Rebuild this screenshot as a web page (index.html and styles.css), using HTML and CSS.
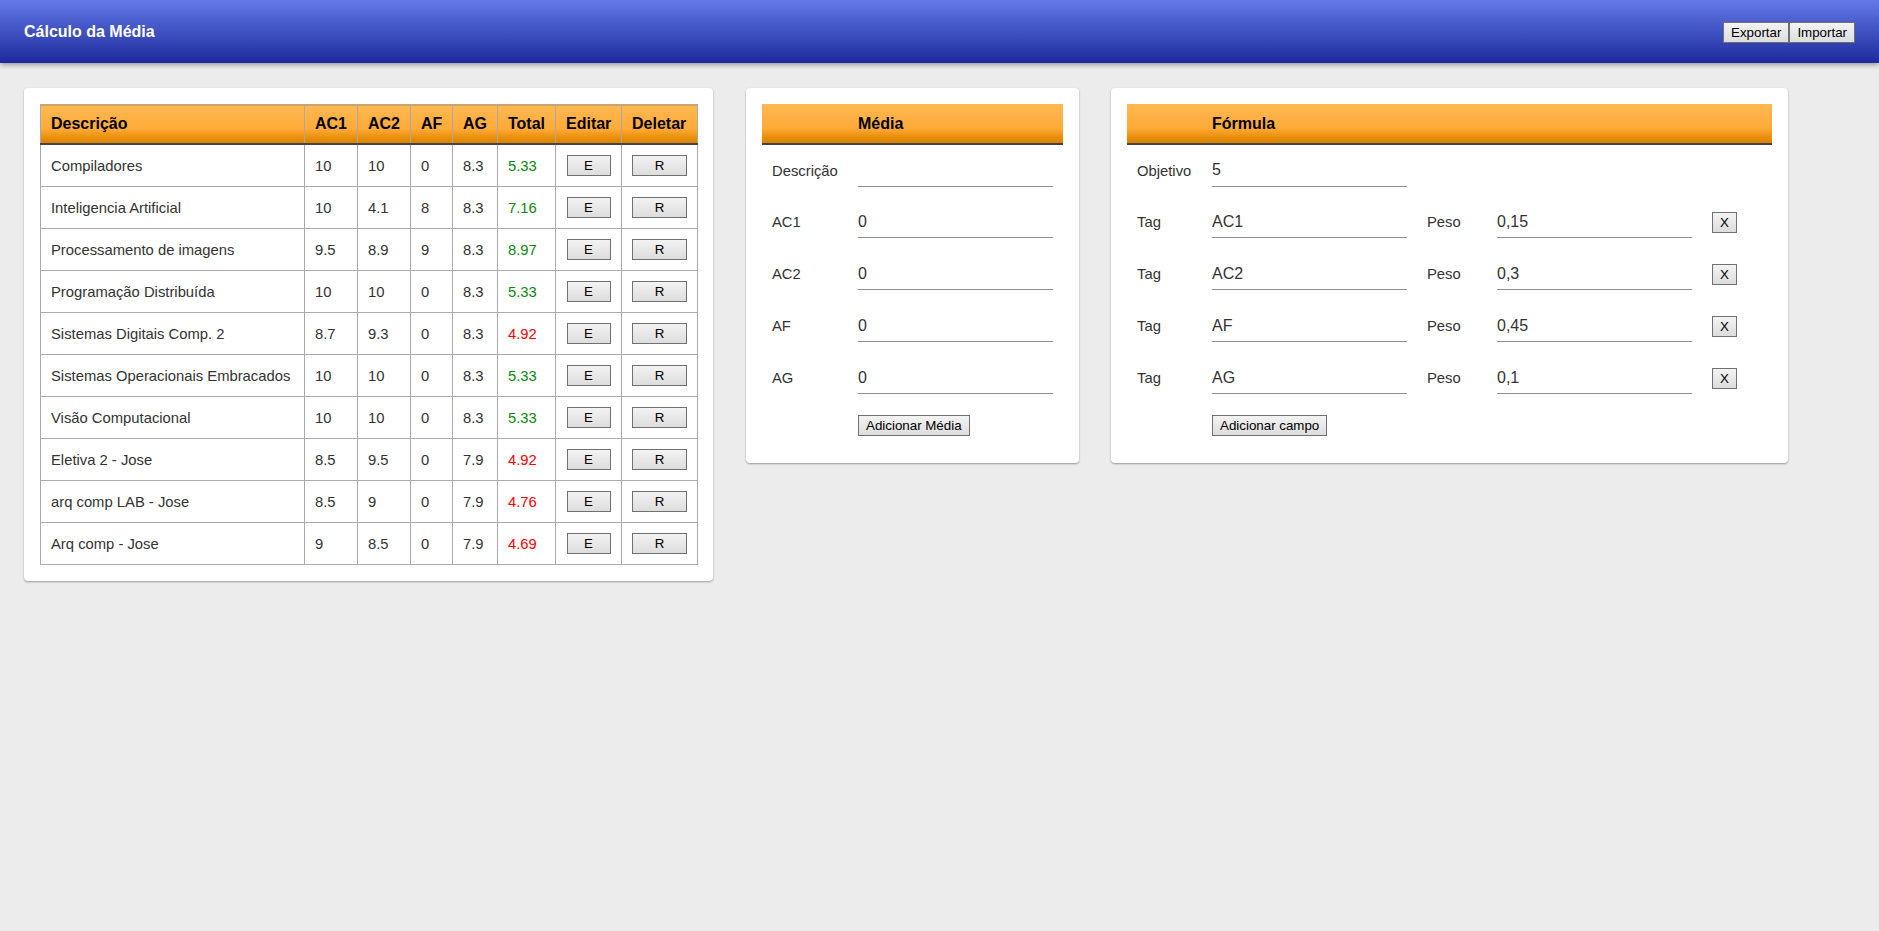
FILE: index.html
```html
<!DOCTYPE html>
<html lang="pt-BR">
<head>
<meta charset="utf-8">
<title>Cálculo da Média</title>
<link rel="stylesheet" href="styles.css">
</head>
<body>
<header class="topbar">
  <h1 class="title">Cálculo da Média</h1>
  <div class="actions">
    <button class="btn">Exportar</button><button class="btn">Importar</button>
  </div>
</header>
<main class="content">
  <section class="card card-list">
    <table class="grid">
      <colgroup>
        <col class="c-desc"><col class="c-ac1"><col class="c-ac2"><col class="c-af"><col class="c-ag"><col class="c-total"><col class="c-edit"><col class="c-del">
      </colgroup>
      <thead>
        <tr><th>Descrição</th><th>AC1</th><th>AC2</th><th>AF</th><th>AG</th><th>Total</th><th>Editar</th><th>Deletar</th></tr>
      </thead>
      <tbody>
        <tr><td>Compiladores</td><td>10</td><td>10</td><td>0</td><td>8.3</td><td class="ok">5.33</td><td class="c"><button class="btn btn-e">E</button></td><td class="c"><button class="btn btn-r">R</button></td></tr>
        <tr><td>Inteligencia Artificial</td><td>10</td><td>4.1</td><td>8</td><td>8.3</td><td class="ok">7.16</td><td class="c"><button class="btn btn-e">E</button></td><td class="c"><button class="btn btn-r">R</button></td></tr>
        <tr><td>Processamento de imagens</td><td>9.5</td><td>8.9</td><td>9</td><td>8.3</td><td class="ok">8.97</td><td class="c"><button class="btn btn-e">E</button></td><td class="c"><button class="btn btn-r">R</button></td></tr>
        <tr><td>Programação Distribuída</td><td>10</td><td>10</td><td>0</td><td>8.3</td><td class="ok">5.33</td><td class="c"><button class="btn btn-e">E</button></td><td class="c"><button class="btn btn-r">R</button></td></tr>
        <tr><td>Sistemas Digitais Comp. 2</td><td>8.7</td><td>9.3</td><td>0</td><td>8.3</td><td class="bad">4.92</td><td class="c"><button class="btn btn-e">E</button></td><td class="c"><button class="btn btn-r">R</button></td></tr>
        <tr><td>Sistemas Operacionais Embracados</td><td>10</td><td>10</td><td>0</td><td>8.3</td><td class="ok">5.33</td><td class="c"><button class="btn btn-e">E</button></td><td class="c"><button class="btn btn-r">R</button></td></tr>
        <tr><td>Visão Computacional</td><td>10</td><td>10</td><td>0</td><td>8.3</td><td class="ok">5.33</td><td class="c"><button class="btn btn-e">E</button></td><td class="c"><button class="btn btn-r">R</button></td></tr>
        <tr><td>Eletiva 2 - Jose</td><td>8.5</td><td>9.5</td><td>0</td><td>7.9</td><td class="bad">4.92</td><td class="c"><button class="btn btn-e">E</button></td><td class="c"><button class="btn btn-r">R</button></td></tr>
        <tr><td>arq comp LAB - Jose</td><td>8.5</td><td>9</td><td>0</td><td>7.9</td><td class="bad">4.76</td><td class="c"><button class="btn btn-e">E</button></td><td class="c"><button class="btn btn-r">R</button></td></tr>
        <tr><td>Arq comp - Jose</td><td>9</td><td>8.5</td><td>0</td><td>7.9</td><td class="bad">4.69</td><td class="c"><button class="btn btn-e">E</button></td><td class="c"><button class="btn btn-r">R</button></td></tr>
      </tbody>
    </table>
  </section>

  <section class="card card-media">
    <table class="form">
      <colgroup><col class="m-label"><col class="m-input"></colgroup>
      <thead><tr><th></th><th>Média</th></tr></thead>
      <tbody>
        <tr><td>Descrição</td><td><input class="field" type="text" value=""></td></tr>
        <tr><td>AC1</td><td><input class="field" type="text" value="0"></td></tr>
        <tr><td>AC2</td><td><input class="field" type="text" value="0"></td></tr>
        <tr><td>AF</td><td><input class="field" type="text" value="0"></td></tr>
        <tr><td>AG</td><td><input class="field" type="text" value="0"></td></tr>
        <tr class="btn-row"><td></td><td><button class="btn">Adicionar Média</button></td></tr>
      </tbody>
    </table>
  </section>

  <section class="card card-formula">
    <table class="form">
      <colgroup><col class="f-label"><col class="f-input"><col class="f-peso"><col class="f-input"><col class="f-x"></colgroup>
      <thead><tr><th></th><th>Fórmula</th><th></th><th></th><th></th></tr></thead>
      <tbody>
        <tr><td>Objetivo</td><td><input class="field" type="text" value="5"></td><td></td><td></td><td></td></tr>
        <tr><td>Tag</td><td><input class="field" type="text" value="AC1"></td><td>Peso</td><td><input class="field" type="text" value="0,15"></td><td><button class="btn btn-x">X</button></td></tr>
        <tr><td>Tag</td><td><input class="field" type="text" value="AC2"></td><td>Peso</td><td><input class="field" type="text" value="0,3"></td><td><button class="btn btn-x">X</button></td></tr>
        <tr><td>Tag</td><td><input class="field" type="text" value="AF"></td><td>Peso</td><td><input class="field" type="text" value="0,45"></td><td><button class="btn btn-x">X</button></td></tr>
        <tr><td>Tag</td><td><input class="field" type="text" value="AG"></td><td>Peso</td><td><input class="field" type="text" value="0,1"></td><td><button class="btn btn-x">X</button></td></tr>
        <tr class="btn-row"><td></td><td><button class="btn">Adicionar campo</button></td><td></td><td></td><td></td></tr>
      </tbody>
    </table>
  </section>
</main>
</body>
</html>
```

FILE: styles.css
```css
html, body {
  margin: 0;
  padding: 0;
}
body {
  background: #ececec;
  font-family: "Liberation Sans", Arial, sans-serif;
  color: #333;
  min-height: 931px;
}

.topbar {
  height: 63px;
  display: flex;
  align-items: center;
  justify-content: space-between;
  padding: 0 24px;
  background: linear-gradient(#6479e8, #1c2a9c);
  box-shadow: 0 2px 5px rgba(0, 0, 0, 0.35);
}
.title {
  margin: 0;
  font-size: 16px;
  font-weight: bold;
  color: #fff;
}
.actions {
  display: flex;
  padding-top: 1px;
}

.btn {
  font-family: "Liberation Sans", Arial, sans-serif;
  font-size: 13.33px;
  line-height: 15px;
  color: #000;
  padding: 2px 7px;
  border: 1px solid #707070;
  border-radius: 0;
  background: linear-gradient(#f3f3f3, #dddddd);
  margin: 0;
}
.actions .btn + .btn {
  border-left-width: 2px;
  margin-left: -1px;
}

.content {
  display: flex;
  align-items: flex-start;
  gap: 33px;
  padding: 25px 24px;
}

.card {
  background: #fff;
  border-radius: 4px;
  box-shadow: 0 1px 2px rgba(0, 0, 0, 0.35);
  padding: 16px;
}
.card-list { width: 657px; }
.card-media { width: 301px; }
.card-formula { width: 645px; margin-left: -1px; }

/* list table */
.grid {
  width: 657px;
  border-collapse: collapse;
  table-layout: fixed;
  font-size: 14.8px;
}
.c-desc { width: 264px; }
.c-ac1 { width: 53px; }
.c-ac2 { width: 53px; }
.c-af { width: 42px; }
.c-ag { width: 45px; }
.c-total { width: 58px; }
.c-edit { width: 66px; }
.c-del { width: 76px; }

.grid th,
.form th {
  height: 38px;
  padding: 0 10px;
  text-align: left;
  font-size: 16px;
  font-weight: bold;
  color: #000;
  background: linear-gradient(#ffb852 0%, #ffaa38 62%, #e88f0a 85%, #db8200 100%);
  border-bottom: 2px solid #444;
}
.form th {
  height: 39px;
}
.grid th {
  border-left: 1px solid #aaa;
  border-right: 1px solid #aaa;
  border-top: 1px solid #aaa;
}
.grid td {
  height: 41px;
  padding: 0 10px;
  border: 1px solid #aaa;
  color: #333;
  white-space: nowrap;
}
.grid td.c {
  padding: 0;
  text-align: center;
}
.grid td.ok { color: #0b8a0b; }
.grid td.bad { color: #ff0000; }

.btn-e { width: 44px; }
.btn-r { width: 55px; }
.btn-x { width: 25px; padding: 2px 0; }

/* form tables */
.form {
  width: 100%;
  border-collapse: collapse;
  table-layout: fixed;
  font-size: 14.8px;
}
.m-label { width: 86px; }
.m-input { width: 215px; }
.f-label { width: 75px; }
.f-input { width: 215px; }
.f-peso { width: 70px; }
.f-x { width: 70px; }

.form td {
  height: 52px;
  padding: 0 10px;
  color: #333;
  box-sizing: border-box;
}
.form .btn-row td {
  height: 43px;
}
.field {
  display: block;
  box-sizing: border-box;
  width: 195px;
  height: 32px;
  padding: 0;
  border: none;
  border-bottom: 1px solid #909090;
  background: transparent;
  font-family: "Liberation Sans", Arial, sans-serif;
  font-size: 16px;
  color: #333;
  outline: none;
}
.btn-row .btn {
  display: block;
}
```
